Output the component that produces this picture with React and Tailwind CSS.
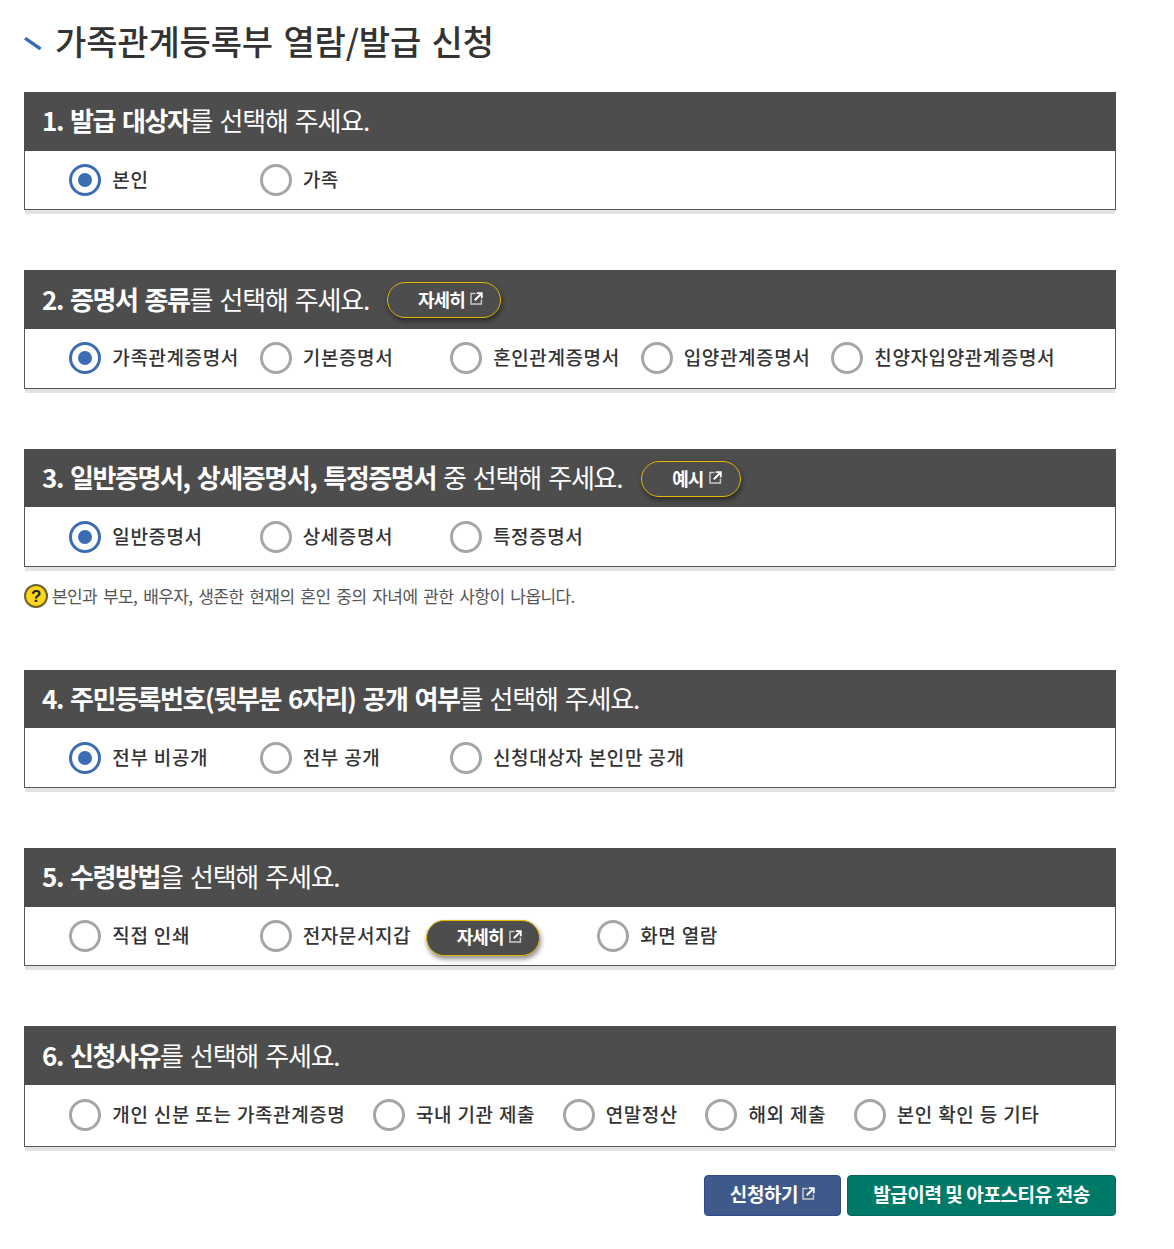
const FONT = "font-['Noto_Sans_CJK_KR','Noto_Sans',sans-serif]";

function Ext({ className = "" }) {
  return (
    <svg viewBox="0 0 13 13" className={`w-[13px] h-[13px] shrink-0 ${className}`} fill="none" stroke="currentColor">
      <path d="M5.5 1.6H1V12H11.4V7.5" strokeWidth="1.5" stroke="#c9c9c9" />
      <path d="M4.8 8.2 11 2" strokeWidth="2" />
      <path d="M6.8 1.2H11.8V6.2" strokeWidth="1.8" />
    </svg>
  );
}

function Pill({ children, w }) {
  return (
    <span className={`inline-flex items-center justify-center h-[36px] ${w} rounded-[18px] border border-[#e6b800] bg-[#4d4d4d] text-white text-[18px] font-bold tracking-[-0.9px] shadow-[1px_3px_5px_rgba(0,0,0,0.45)] pl-[12px] gap-[5px]`}>
      <span className="-mt-[2px]">{children}</span>
      <Ext className="text-white -mt-[3px]" />
    </span>
  );
}

function Radio({ label, checked, extra = "min-w-[190.35px] pr-[21px]" }) {
  return (
    <label className={`inline-flex items-center ${extra}`}>
      <span className={`w-[32px] h-[32px] rounded-full border-[3px] flex items-center justify-center bg-white shrink-0 ${checked ? "border-[#3b6cb4]" : "border-[#a6a6a6]"}`}>
        {checked && <span className="w-[14px] h-[14px] rounded-full bg-[#3b6cb4]" />}
      </span>
      <span className="ml-[11px] text-[19px] font-medium tracking-[0.6px] [word-spacing:0.5px] text-[#333333] leading-none -mt-[3px] whitespace-nowrap">{label}</span>
    </label>
  );
}

function Panel({ bold, rest, pill, body, tall, mb = "mb-[60px]" }) {
  return (
    <section className={`${mb} shadow-[0_5px_0_-1px_#e2e2e2]`}>
      <div className="h-[58.6px] bg-[#4d4d4d] flex items-center pl-[18px] text-white text-[26px] leading-none">
        <h2 className="whitespace-nowrap -mt-[2px]">
          <b className="font-bold tracking-[-1.4px] [word-spacing:2.5px]">{bold}</b>
          <span className="font-normal tracking-[-1.2px] [word-spacing:2.5px]">{rest}</span>
        </h2>
        {pill && <span className="ml-[18.5px] mt-[1px] flex">{pill}</span>}
      </div>
      <div className={`${tall ? "h-[62px]" : "h-[59.8px]"} border-x border-b border-[#555555] bg-white flex items-center pl-[44.3px]`}>
        {body}
      </div>
    </section>
  );
}

const COMPACT = "pr-[27.5px]";

export default function App() {
  return (
    <div className={`${FONT} bg-white w-[1174px] h-[1249px] px-[24px] pr-[58px] text-[#333333]`}>
      <header className="h-[92px] flex items-center pb-[8px]">
        <svg viewBox="0 0 18 13" className="w-[18px] h-[13px] mt-[2px] shrink-0">
          <path d="M1 1.2 16.6 12" stroke="#3b6cb4" strokeWidth="3.4" fill="none" />
        </svg>
        <h1 className="ml-[13px] text-[34px] font-medium leading-none tracking-[-0.15px] [word-spacing:3px] text-[#333333] whitespace-nowrap -mt-[2px]">가족관계등록부 열람/발급 신청</h1>
      </header>

      <Panel
        bold="1. 발급 대상자"
        rest="를 선택해 주세요."
        body={<><Radio label="본인" checked /><Radio label="가족" /></>}
      />
      <Panel
        bold="2. 증명서 종류"
        rest="를 선택해 주세요."
        pill={<Pill w="w-[114px]">자세히</Pill>}
        body={<>
          <Radio label="가족관계증명서" checked />
          <Radio label="기본증명서" />
          <Radio label="혼인관계증명서" />
          <Radio label="입양관계증명서" />
          <Radio label="친양자입양관계증명서" />
        </>}
      />
      <Panel
        bold="3. 일반증명서, 상세증명서, 특정증명서"
        rest=" 중 선택해 주세요."
        pill={<Pill w="w-[100px]">예시</Pill>}
        mb="mb-[15px]"
        body={<><Radio label="일반증명서" checked /><Radio label="상세증명서" /><Radio label="특정증명서" /></>}
      />
      <p className="h-[28px] mb-[59.4px] flex items-center text-[17px] leading-none text-[#555555] tracking-[-0.6px] [word-spacing:2.7px] whitespace-nowrap">
        <span className="w-[24px] h-[24px] rounded-full bg-[#fdd51c] border-2 border-[#6b6230] flex items-center justify-center text-[17px] font-black text-[#222222] mr-[4px] shrink-0 font-['Liberation_Sans',sans-serif]">?</span>
        <span className="-mt-[2px]">본인과 부모, 배우자, 생존한 현재의 혼인 중의 자녀에 관한 사항이 나옵니다.</span>
      </p>
      <Panel
        bold="4. 주민등록번호(뒷부분 6자리) 공개 여부"
        rest="를 선택해 주세요."
        body={<><Radio label="전부 비공개" checked /><Radio label="전부 공개" /><Radio label="신청대상자 본인만 공개" /></>}
      />
      <Panel
        bold="5. 수령방법"
        rest="을 선택해 주세요."
        body={<>
          <Radio label="직접 인쇄" />
          <span className="inline-flex items-center mr-[57px]">
            <Radio label="전자문서지갑" extra="pr-[15px]" />
            <span className="mt-[4px] flex"><Pill w="w-[114px]">자세히</Pill></span>
          </span>
          <Radio label="화면 열람" />
        </>}
      />
      <Panel
        tall
        mb="mb-[28px]"
        bold="6. 신청사유"
        rest="를 선택해 주세요."
        body={<>
          <Radio label="개인 신분 또는 가족관계증명" extra={COMPACT} />
          <Radio label="국내 기관 제출" extra={COMPACT} />
          <Radio label="연말정산" extra={COMPACT} />
          <Radio label="해외 제출" extra={COMPACT} />
          <Radio label="본인 확인 등 기타" extra={COMPACT} />
        </>}
      />
      <div className="flex justify-end gap-[6px]">
        <button className="w-[137px] h-[41px] rounded-[4px] bg-[#3f5a8a] border border-[#2f4b8c] text-white text-[19px] font-bold tracking-[-0.4px] flex items-center justify-center gap-[4px]">
          <span className="-mt-[2px]">신청하기</span><Ext className="text-white -mt-[3px]" />
        </button>
        <button className="w-[269px] h-[41px] rounded-[4px] bg-[#007a68] border border-[#00695a] text-white text-[19px] font-bold tracking-[-0.4px] flex items-center justify-center">
          <span className="-mt-[2px]">발급이력 및 아포스티유 전송</span>
        </button>
      </div>
    </div>
  );
}
